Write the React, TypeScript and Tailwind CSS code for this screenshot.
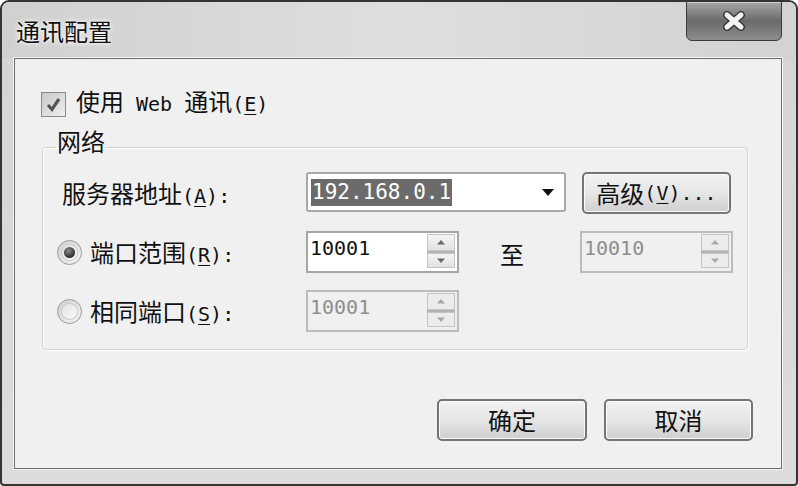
import React from "react";

const Half = ({ children }: { children: React.ReactNode }) => (
  <span className="font-['DejaVu_Sans_Mono',monospace] text-[20px]">{children}</span>
);

const U = ({ children }: { children: React.ReactNode }) => (
  <span className="underline underline-offset-[3px] decoration-1">{children}</span>
);

function Arrow({ up, color }: { up?: boolean; color: string }) {
  return (
    <svg width="10" height="6" viewBox="0 0 10 6">
      {up ? <path d="M1 5.5 L5 1 L9 5.5 Z" fill={color} /> : <path d="M1 0.5 L9 0.5 L5 5 Z" fill={color} />}
    </svg>
  );
}

function Spin({ value, disabled }: { value: string; disabled?: boolean }) {
  return (
    <div
      className={`w-[153px] h-[42px] border-2 flex ${
        disabled ? "border-[#bcbcbc] bg-[#f0f0f0]" : "border-[#a6a6a6] bg-white"
      }`}
    >
      <div
        className={`flex-1 pl-[2px] pt-[4px] font-['DejaVu_Sans_Mono',monospace] text-[20px] leading-[22px] ${
          disabled ? "text-[#8e8e8e]" : "text-[#111]"
        }`}
      >
        {value}
      </div>
      <div className="w-[30px] pt-[1px] pb-[3px] pr-[2px] flex flex-col">
        <div
          className={`h-[17px] border border-[#c4c4c4] flex items-center justify-center ${
            disabled ? "bg-[#ececec]" : "bg-linear-to-b from-[#f4f4f4] to-[#e2e2e2]"
          }`}
        >
          <Arrow up color={disabled ? "#a8a8a8" : "#6a6a6a"} />
        </div>
        <div className="h-[3px] bg-[#b4b4b4]" />
        <div
          className={`h-[15px] border border-[#c4c4c4] flex items-center justify-center ${
            disabled ? "bg-[#ececec]" : "bg-linear-to-b from-[#f4f4f4] to-[#e2e2e2]"
          }`}
        >
          <Arrow color={disabled ? "#a8a8a8" : "#6a6a6a"} />
        </div>
      </div>
    </div>
  );
}

function Radio({ checked }: { checked?: boolean }) {
  return (
    <div className="w-[25px] h-[25px] rounded-full border border-[#9a9a9a] bg-linear-to-br from-[#d0d0d0] to-[#f4f4f4] flex items-center justify-center shrink-0">
      <div className="w-[17px] h-[17px] rounded-full bg-linear-to-br from-[#e2e2e2] to-[#fafafa] border border-[#c8c8c8] flex items-center justify-center">
        {checked && (
          <div className="w-[11px] h-[11px] rounded-full bg-[radial-gradient(circle_at_40%_35%,#8a8a8a,#2e2e2e_70%)]" />
        )}
      </div>
    </div>
  );
}

function Btn({ children, w }: { children: React.ReactNode; w: string }) {
  return (
    <div
      className={`${w} h-[42px] rounded-[5px] border-2 border-[#757575] bg-linear-to-b from-[#f2f2f2] via-[#e6e6e6] to-[#cfcfcf] shadow-[inset_0_0_0_1px_#fbfbfb] flex items-center justify-center text-[24px] text-[#111] leading-none`}
    >
      {children}
    </div>
  );
}

export default function App() {
  return (
    <div className="w-[798px] h-[486px] bg-white font-['Noto_Sans_CJK_SC','Noto_Sans',sans-serif] text-[#111]">
      <div className="w-full h-full rounded-t-[9px] rounded-b-[4px] border-2 border-[#343434] bg-linear-to-b from-[#d4d4d4] to-[#dcdcdc] flex flex-col overflow-hidden">
        {/* Title bar */}
        <div className="h-[56px] shrink-0 flex items-start justify-between bg-linear-to-r from-[#d0d0d0] via-[#dedede] to-[#d2d2d2]">
          <div className="pl-[14px] pt-[15px] text-[24px] leading-[28px] text-[#101010] [text-shadow:0_0_6px_#ffffff,0_0_3px_#ffffff]">
            通讯配置
          </div>
          <div className="mr-[14px] -mt-[1px] w-[96px] h-[40px] rounded-b-[6px] border border-[#3a3a3a] bg-linear-to-b from-[#a8a8a8] via-[#6a6a6a] to-[#8e8e8e] shadow-[inset_0_1px_0_#d0d0d0] flex items-center justify-center">
            <svg width="28" height="20" viewBox="0 0 28 20">
              <path d="M7 4 L21 16 M21 4 L7 16" stroke="#3a3a3a" strokeWidth="8" strokeLinecap="round" />
              <path d="M7 4 L21 16 M21 4 L7 16" stroke="#f4f4f4" strokeWidth="5" strokeLinecap="round" />
            </svg>
          </div>
        </div>

        {/* Client area + frame */}
        <div className="flex-1 pl-[12px] pr-[14px] pb-[15px] flex">
          <div className="flex-1 border border-[#6e6e6e] bg-[#f0f0f0] flex flex-col shadow-[0_0_0_1px_#f4f4f4]">
            {/* checkbox row */}
            <div className="mt-[33px] ml-[26px] h-[25px] flex items-center gap-[10px]">
              <div className="w-[25px] h-[25px] border border-[#8a8a8a] bg-linear-to-br from-[#c8c8c8] to-[#f0f0f0] flex items-center justify-center">
                <svg width="17" height="17" viewBox="0 0 17 17">
                  <path d="M3 9 L7 13.5 L14 3" stroke="#555555" strokeWidth="3.2" fill="none" />
                </svg>
              </div>
              <div className="text-[24px] leading-[28px] -mt-[4px]">
                使用<Half> Web </Half>通讯<Half>(<U>E</U>)</Half>
              </div>
            </div>

            {/* group box */}
            <fieldset className="mt-[12px] ml-[27px] mr-[33px] border border-[#d2d2d2] rounded-[4px] shadow-[inset_1px_1px_0_#ffffff,1px_1px_0_#ffffff] px-0 pt-[6px] pb-[16px] flex flex-col gap-[15px]">
              <legend className="ml-[13px] px-[1px] text-[24px] leading-[24px] pb-[12px]">网络</legend>

              {/* row 1 */}
              <div className="h-[44px] flex items-center">
                <div className="w-[263px] pl-[19px] text-[24px] leading-none">
                  服务器地址<Half>(<U>A</U>):</Half>
                </div>
                <div className="w-[260px] h-[40px] -mt-[2px] rounded-[3px] border-2 border-[#a8a8a8] bg-white flex items-center pl-[3px] pr-[10px]">
                  <div className="flex-1">
                    <span className="bg-[#6b6b6b] text-white font-['DejaVu_Sans_Mono',monospace] text-[21px] leading-[27px] inline-block px-[1px]">
                      192.168.0.1
                    </span>
                  </div>
                  <svg width="12" height="7" viewBox="0 0 12 7">
                    <path d="M0 0 L12 0 L6 7 Z" fill="#111" />
                  </svg>
                </div>
                <div className="ml-[16px]">
                  <Btn w="w-[149px]">
                    高级<Half> (<U>V</U>)...</Half>
                  </Btn>
                </div>
              </div>

              {/* row 2 */}
              <div className="h-[44px] flex items-center">
                <div className="w-[263px] pl-[14px] flex items-center gap-[8px]">
                  <Radio checked />
                  <span className="text-[24px] leading-none">
                    端口范围<Half>(<U>R</U>):</Half>
                  </span>
                </div>
                <Spin value="10001" />
                <div className="w-[121px] pl-[41px] text-[24px] leading-none mt-[4px]">至</div>
                <Spin value="10010" disabled />
              </div>

              {/* row 3 */}
              <div className="h-[44px] flex items-center">
                <div className="w-[263px] pl-[14px] flex items-center gap-[8px]">
                  <Radio />
                  <span className="text-[24px] leading-none">
                    相同端口<Half>(<U>S</U>):</Half>
                  </span>
                </div>
                <Spin value="10001" disabled />
              </div>
            </fieldset>

            {/* buttons */}
            <div className="mt-[49px] mr-[28px] flex justify-end gap-[17px]">
              <Btn w="w-[150px]">确定</Btn>
              <Btn w="w-[149px]">取消</Btn>
            </div>
          </div>
        </div>
      </div>
    </div>
  );
}
